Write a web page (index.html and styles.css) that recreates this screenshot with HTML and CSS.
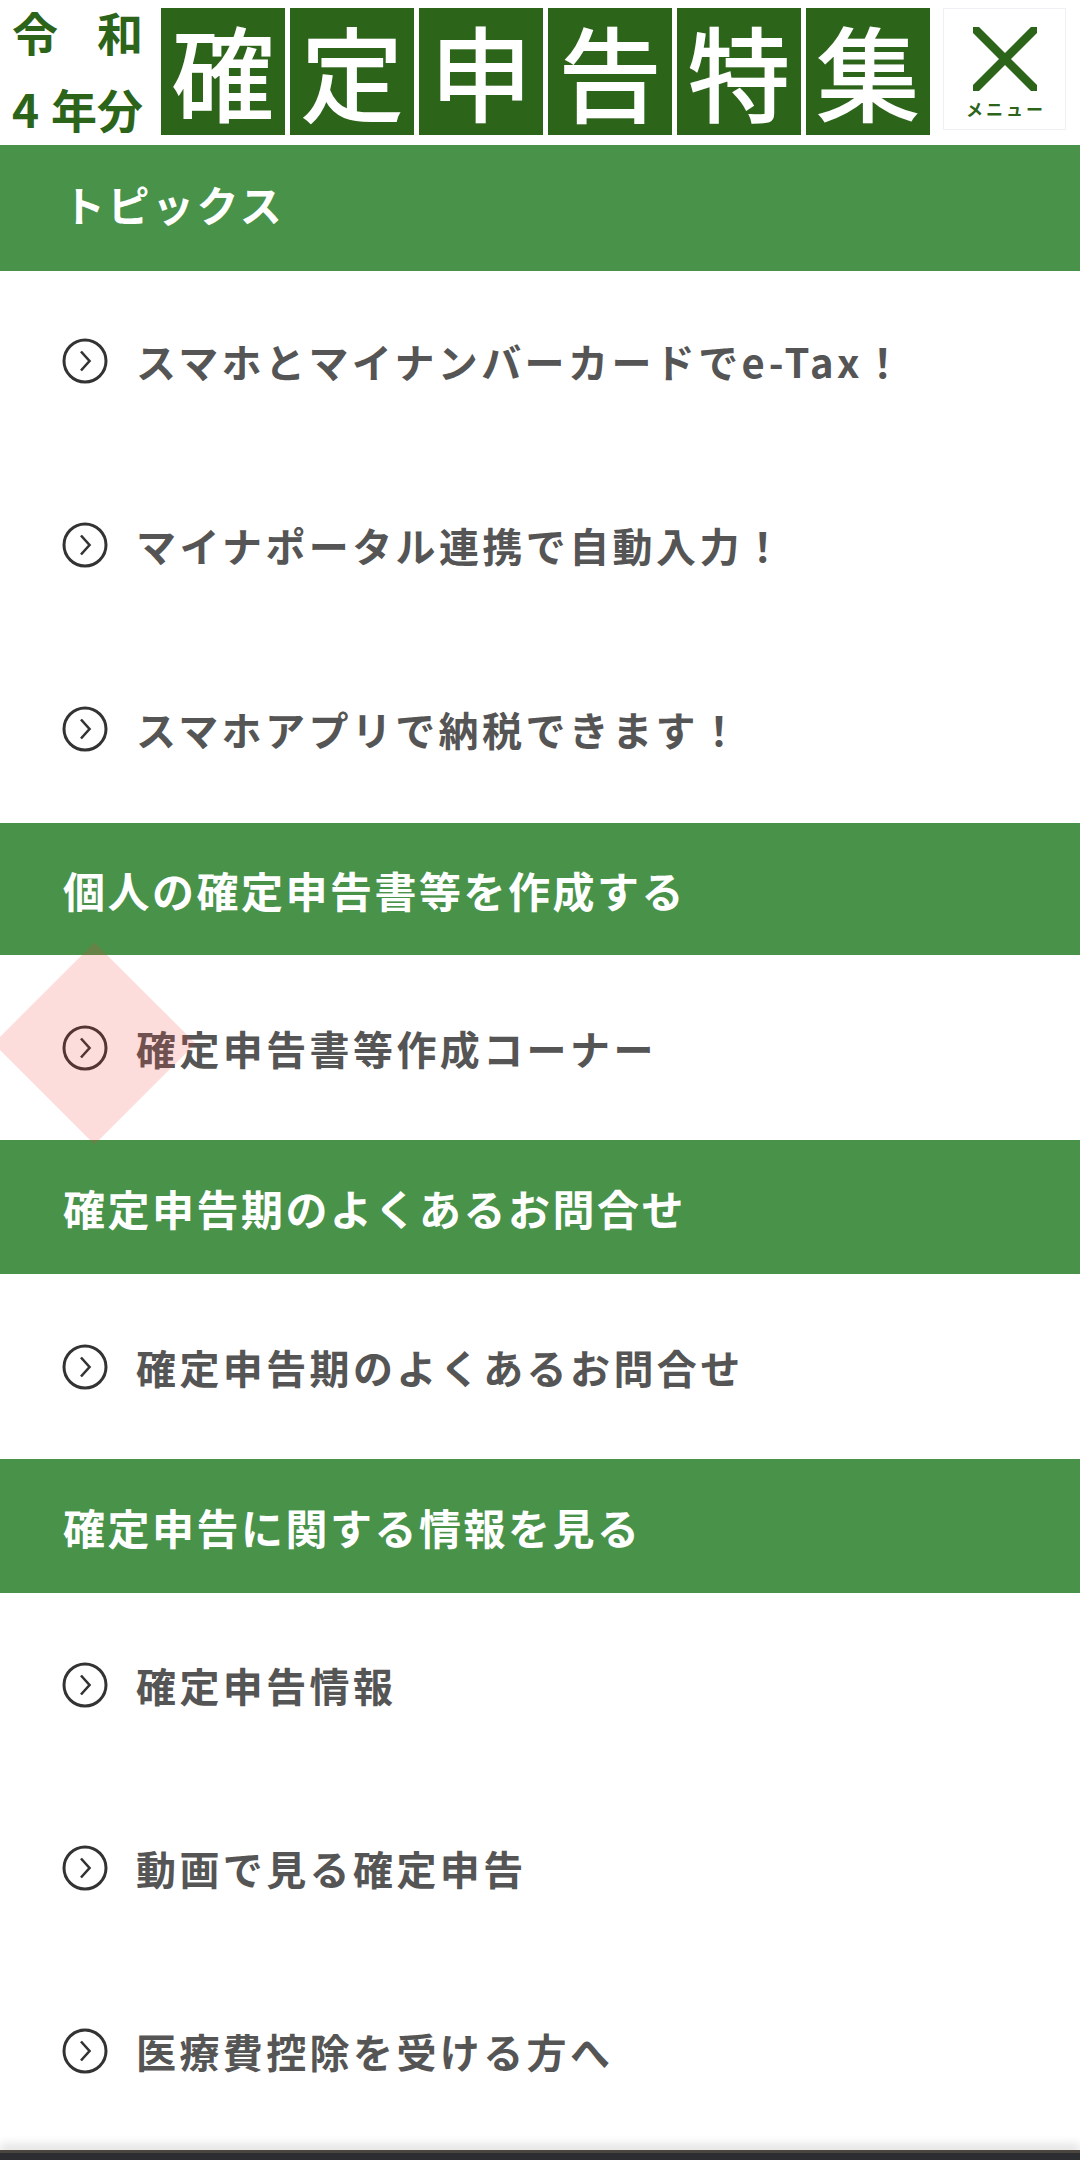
FILE: index.html
```html
<!DOCTYPE html>
<html lang="ja">
<head>
<meta charset="utf-8">
<title>令和4年分 確定申告特集</title>
<link rel="stylesheet" href="styles.css">
</head>
<body>
<header class="top">
  <div class="era">
    <div class="era-row"><span>令</span><span>和</span></div>
    <div class="era-row"><span>4</span><span>年分</span></div>
  </div>
  <div class="title">
    <span class="tile">確</span><span class="tile">定</span><span class="tile">申</span><span class="tile">告</span><span class="tile">特</span><span class="tile">集</span>
  </div>
  <button class="menu" type="button">
    <svg class="menu-x" width="64" height="64" viewBox="0 0 64 64"><path d="M0 0 L64 64 M64 0 L0 64" stroke="#2c6419" stroke-width="8.5" fill="none"/></svg>
    <span class="menu-label">メニュー</span>
  </button>
</header>

<nav class="menu-list">
  <section>
    <h2 class="sec sec-first">トピックス</h2>
    <ul class="items">
      <li class="item"><svg class="ico" width="46" height="46" viewBox="0 0 46 46"><circle cx="23" cy="23" r="21" fill="none" stroke="#333" stroke-width="3"/><path d="M19 13.5 L27.5 23 L19 32.5" fill="none" stroke="#333" stroke-width="2.6"/></svg><span class="label">スマホとマイナンバーカードでe-Tax！</span></li>
      <li class="item"><svg class="ico" width="46" height="46" viewBox="0 0 46 46"><circle cx="23" cy="23" r="21" fill="none" stroke="#333" stroke-width="3"/><path d="M19 13.5 L27.5 23 L19 32.5" fill="none" stroke="#333" stroke-width="2.6"/></svg><span class="label">マイナポータル連携で自動入力！</span></li>
      <li class="item"><svg class="ico" width="46" height="46" viewBox="0 0 46 46"><circle cx="23" cy="23" r="21" fill="none" stroke="#333" stroke-width="3"/><path d="M19 13.5 L27.5 23 L19 32.5" fill="none" stroke="#333" stroke-width="2.6"/></svg><span class="label">スマホアプリで納税できます！</span></li>
    </ul>
  </section>
  <section>
    <h2 class="sec sec-mid">個人の確定申告書等を作成する</h2>
    <ul class="items">
      <li class="item item-single"><svg class="ico" width="46" height="46" viewBox="0 0 46 46"><circle cx="23" cy="23" r="21" fill="none" stroke="#333" stroke-width="3"/><path d="M19 13.5 L27.5 23 L19 32.5" fill="none" stroke="#333" stroke-width="2.6"/></svg><span class="label">確定申告書等作成コーナー</span></li>
    </ul>
  </section>
  <section>
    <h2 class="sec">確定申告期のよくあるお問合せ</h2>
    <ul class="items">
      <li class="item item-single"><svg class="ico" width="46" height="46" viewBox="0 0 46 46"><circle cx="23" cy="23" r="21" fill="none" stroke="#333" stroke-width="3"/><path d="M19 13.5 L27.5 23 L19 32.5" fill="none" stroke="#333" stroke-width="2.6"/></svg><span class="label">確定申告期のよくあるお問合せ</span></li>
    </ul>
  </section>
  <section>
    <h2 class="sec">確定申告に関する情報を見る</h2>
    <ul class="items">
      <li class="item"><svg class="ico" width="46" height="46" viewBox="0 0 46 46"><circle cx="23" cy="23" r="21" fill="none" stroke="#333" stroke-width="3"/><path d="M19 13.5 L27.5 23 L19 32.5" fill="none" stroke="#333" stroke-width="2.6"/></svg><span class="label">確定申告情報</span></li>
      <li class="item"><svg class="ico" width="46" height="46" viewBox="0 0 46 46"><circle cx="23" cy="23" r="21" fill="none" stroke="#333" stroke-width="3"/><path d="M19 13.5 L27.5 23 L19 32.5" fill="none" stroke="#333" stroke-width="2.6"/></svg><span class="label">動画で見る確定申告</span></li>
      <li class="item"><svg class="ico" width="46" height="46" viewBox="0 0 46 46"><circle cx="23" cy="23" r="21" fill="none" stroke="#333" stroke-width="3"/><path d="M19 13.5 L27.5 23 L19 32.5" fill="none" stroke="#333" stroke-width="2.6"/></svg><span class="label">医療費控除を受ける方へ</span></li>
    </ul>
  </section>
</nav>

<div class="diamond"></div>
<div class="bottom-bar"></div>
</body>
</html>
```

FILE: styles.css
```css
html, body {
  margin: 0;
  padding: 0;
  background: #fff;
}
body {
  font-family: "Noto Sans CJK JP", "Noto Sans", sans-serif;
  position: relative;
  width: 1080px;
  height: 2160px;
  overflow: hidden;
}

/* ---------- top header ---------- */
.top {
  display: flex;
  align-items: flex-start;
  height: 145px;
  padding: 8px 0 0 12px;
  box-sizing: border-box;
}
.era {
  width: 131px;
  margin-right: 18px;
  padding-top: 0;
  color: #2c6419;
  font-weight: 700;
  font-size: 46px;
  line-height: 46px;
  display: flex;
  flex-direction: column;
  gap: 31px;
}
.era-row {
  display: flex;
  justify-content: space-between;
}
.title {
  display: flex;
  gap: 5px;
}
.tile {
  display: flex;
  align-items: center;
  justify-content: center;
  width: 124px;
  height: 127px;
  background: #2c6419;
  color: #fff;
  font-size: 102px;
  font-weight: 400;
  -webkit-text-stroke: 2px #fff;
  line-height: 1;
  padding-bottom: 4px;
  box-sizing: border-box;
  overflow: hidden;
}
.menu {
  margin-left: 13px;
  width: 123px;
  height: 122px;
  box-sizing: border-box;
  border: 1px solid #eef0f4;
  background: #fff;
  padding: 0;
  display: flex;
  flex-direction: column;
  align-items: center;
  font-family: inherit;
}
.menu-x {
  display: block;
  margin-top: 18px;
}
.menu-label {
  display: block;
  margin-top: 8px;
  font-size: 17px;
  line-height: 20px;
  font-weight: 700;
  letter-spacing: 3px;
  padding-left: 3px;
  color: #2c6419;
}

/* ---------- menu list ---------- */
.menu-list section {
  margin: 0;
}
.sec {
  margin: 0;
  height: 134px;
  display: flex;
  align-items: center;
  padding-left: 63px;
  box-sizing: border-box;
  background: #48924a;
  color: #fff;
  font-size: 42px;
  font-weight: 700;
  letter-spacing: 2.5px;
}
.sec-first {
  height: 126px;
  padding-bottom: 10px;
}
.sec-mid {
  height: 132px;
}
.items {
  list-style: none;
  margin: 0;
  padding: 0;
}
.item {
  height: 183px;
  display: flex;
  align-items: center;
  padding-left: 62px;
  box-sizing: border-box;
  color: #555;
  font-size: 40px;
  font-weight: 700;
  letter-spacing: 3.4px;
}
.sec-first + .items .item {
  height: 184px;
  padding-bottom: 4px;
}
.item-single {
  height: 185px;
}
.ico {
  display: block;
  flex: none;
  margin-right: 28px;
}

/* ---------- overlays ---------- */
.diamond {
  position: absolute;
  left: 23px;
  top: 972px;
  width: 143px;
  height: 143px;
  background: rgba(245, 60, 60, 0.18);
  transform: rotate(45deg);
  pointer-events: none;
}
.bottom-bar {
  position: absolute;
  left: 0;
  right: 0;
  bottom: 0;
  height: 7px;
  background: #2c2d30;
  border-top: 3px solid #4a453f;
  box-shadow: 0 -6px 10px rgba(0, 0, 0, 0.12);
}
```
